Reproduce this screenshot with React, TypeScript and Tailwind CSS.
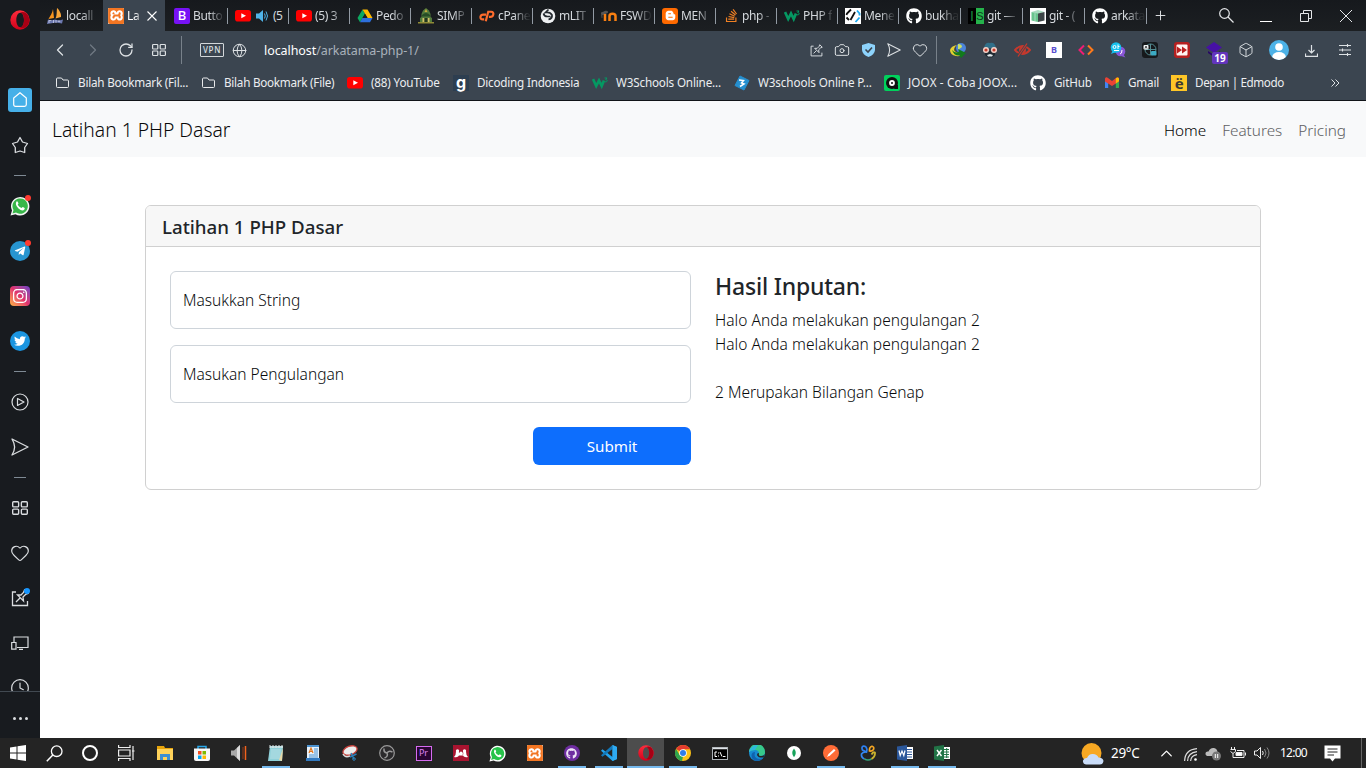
import type { ReactNode } from 'react';
import {
  FaGithub, FaTelegramPlane, FaTwitter, FaStackOverflow, FaBloggerB, FaInstagram,
} from 'react-icons/fa';
import { SiXampp } from 'react-icons/si';
import {
  ChevronLeft, ChevronRight, RotateCw, Globe, Camera, Heart, Box, Plus, ChevronUp, Clock,
} from 'lucide-react';

/* ---------- shared drawings ---------- */

const Opera = ({ size }: { size: number }) => (
  <svg width={size} height={size} viewBox="0 0 20 20">
    <defs>
      <linearGradient id="opg" x1="0" y1="0" x2="0" y2="1">
        <stop offset="0" stopColor="#ff2b3c" />
        <stop offset="1" stopColor="#d0021b" />
      </linearGradient>
    </defs>
    <path d="M10 0.3A9.7 9.7 0 1 0 10 19.700A9.700 9.700 0 0 0 10 .3ZM10.300 2.800C12.600 2.800 14 6 14 10S12.600 17.200 10.300 17.200S6.300 14 6.300 10S8 2.800 10.300 2.800Z" fill="url(#opg)" fillRule="evenodd" />
    <path d="M10.300 2.800C12.600 2.800 14 6 14 10S12.600 17.200 10.300 17.200C12 19 16 17.800 17.500 15.500A9.700 9.700 0 0 0 17.500 4.500C16 2.200 12.500 1 10.300 2.800Z" fill="#a70014" />
  </svg>
);

const YT = () => (
  <span className="flex h-4 w-4 items-center justify-center">
    <svg width="16" height="12" viewBox="0 0 16 12">
      <rect width="16" height="11.500" rx="2.800" fill="#f00" />
      <path d="M6.300 3.300L11 5.800L6.300 8.300Z" fill="#fff" />
    </svg>
  </span>
);

const Xampp = () => (
  <span className="flex h-4 w-4 shrink-0 items-center justify-center overflow-hidden rounded-[1px] bg-white">
    <SiXampp size={17} color="#f37623" className="shrink-0" />
  </span>
);

const Sail = () => (
  <svg width="16" height="16" viewBox="0 0 16 16">
    <path d="M6 1L7 10L1.500 11C3 8 5.500 5 6 1Z" fill="#f7941e" />
    <path d="M10 0C9.500 4 10 8 8.500 10.500L14 9C14.500 6 12.500 2 10 0Z" fill="#f9a63a" />
    <path d="M0 16L1 11.500L4 12.500L8 11.500L12 12.500L16 11.500L15 15.500L9 14.500Z" fill="#6c78af" />
    <path d="M2 15V12.500H4.500M6.500 12V15M9 12V15M11 14L12 12.500L13 14" stroke="#c9cde6" fill="none" strokeWidth=".8" />
  </svg>
);

const Drive = () => (
  <svg width="16" height="16" viewBox="0 0 16 16">
    <path d="M5.500 1.500L.5 10L3 14.200L8 5.800Z" fill="#0da960" />
    <path d="M5.500 1.500H10.500L15.500 10H10.500Z" fill="#ffba00" />
    <path d="M5.400 10H15.500L13 14.200H3Z" fill="#2d6fdd" />
    <path d="M8 5.800L10.500 10H5.500Z" fill="#1b1f23" />
  </svg>
);

const Simp = () => (
  <svg width="16" height="16" viewBox="0 0 16 16">
    <path d="M8 0L11 2.500L12.500 6L12.500 9L14 10V14H2V10L3.500 9V6L5 2.500Z" fill="#517a3c" />
    <path d="M8 1L9.500 4H6.500Z" fill="#c7a93d" />
    <path d="M4 7Q8 3 12 7V8.500H4Z" fill="#274d26" />
    <path d="M4.500 14V10H6.500V14M9.500 14V10H11.500V14" fill="#d2c068" />
    <rect x="6.500" y="10" width="3" height="4" fill="#24371f" />
    <rect y="14" width="16" height="1.500" fill="#8f8a36" />
  </svg>
);

const CPanel = () => (
  <svg width="17" height="12" viewBox="0 0 17 12" fill="none" stroke="#ff6c2c" strokeWidth="2.300">
    <path d="M7.500 4.500H4.500Q2 4.500 1.500 7Q1.300 9.500 4 9.500H5.500" />
    <path d="M7.200 11.500L9.800 1.500H13Q15.700 1.700 15.200 4.500Q14.600 7 12 7H10.500" />
  </svg>
);

const Mlite = () => (
  <svg width="16" height="16" viewBox="0 0 16 16">
    <circle cx="8" cy="8" r="7.300" fill="#eef0f2" />
    <path d="M8.500 1.500L5.500 4.500Q10 3.500 12 7Q12.500 10.500 8.500 11.500M10.500 8.500H7.500Q4 8.500 3.500 5.500" fill="none" stroke="#23292f" strokeWidth="1.700" />
  </svg>
);

const Moodle = () => (
  <svg width="16" height="16" viewBox="0 0 16 16">
    <path d="M0 5L5 3L7 4L4 6L1 6.500V10" fill="#555" stroke="#666" strokeWidth=".6" />
    <path d="M4 13V6M8.500 13V8C8.500 5 14.500 5 14.500 8V13" fill="none" stroke="#f98012" strokeWidth="2.500" />
  </svg>
);

const W3 = () => (
  <svg width="16" height="16" viewBox="0 0 16 16">
    <path d="M1 4L4.200 11L7 5.500L9.700 11L12 5.500" fill="none" stroke="#059862" strokeWidth="2.700" />
    <path d="M12.500 3H15L13.700 4.500C16 4.500 15.500 7.500 13 6.800" fill="none" stroke="#059862" strokeWidth="1" />
  </svg>
);

const CodeSquare = () => (
  <svg width="16" height="16" viewBox="0 0 16 16">
    <rect width="16" height="16" fill="#fff" />
    <path d="M6 1.500L2 5.500L1.500 7M1.500 9.500L4 12M10 4L5.500 12" fill="none" stroke="#111" strokeWidth="1.800" />
    <path d="M12 2.500L14.500 5.500V7.500M14.500 9.500L10.500 14" fill="none" stroke="#1daaf1" strokeWidth="1.800" />
  </svg>
);

const ISIcon = () => (
  <span className="flex h-4 w-4 font-['Liberation_Sans'] text-[14px] leading-4">
    <span className="w-2 bg-black text-center text-[#18883c]">I</span>
    <span className="w-2 bg-[#25b34b] text-center text-[11px] text-[#0d331c]">S</span>
  </span>
);

const GitBox = () => (
  <svg width="16" height="16" viewBox="0 0 16 16">
    <rect width="16" height="16" fill="#fff" />
    <path d="M1.500 4L8 2L14.500 4L8 6Z" fill="#a9dcc0" />
    <path d="M1.500 4L8 5.500V14L1.500 12.500Z" fill="#68c48d" />
    <path d="M8 5.500L14.500 4V12.500L8 14Z" fill="#3d4547" />
    <path d="M5 5V13" stroke="#a9dcc0" />
  </svg>
);

const Blogger = () => (
  <span className="flex h-4 w-4 items-center justify-center rounded-[3px] bg-[#ff6a00]"><FaBloggerB size={11} color="#fff" /></span>
);

const Grid4 = ({ size = 14 }: { size?: number }) => (
  <svg width={size} height={size} viewBox="0 0 14 14" fill="none" stroke="currentColor" strokeWidth="1.200">
    <rect x=".6" y="1.500" width="5.200" height="4.500" rx=".8" /><rect x="8.200" y="1.500" width="5.200" height="4.500" rx=".8" />
    <rect x=".6" y="8" width="5.200" height="4.500" rx=".8" /><rect x="8.200" y="8" width="5.200" height="4.500" rx=".8" />
  </svg>
);

const SendIcon = ({ size = 14 }: { size?: number }) => (
  <svg width={size} height={size} viewBox="0 0 18 18" fill="none" stroke="currentColor" strokeWidth="1.300" strokeLinejoin="round">
    <path d="M1 1L17 9L1 17C4.500 11 4.500 7 1 1Z" />
  </svg>
);

const PinIcon = ({ size = 14 }: { size?: number }) => (
  <svg width={size} height={size} viewBox="0 0 18 18" fill="none" stroke="currentColor" strokeWidth="1.300">
    <path d="M5 3H1.500V16.500H16.500V12" />
    <path d="M13.500 1L17 4.500L14.500 5.500L12 8L12.500 12L6.500 6L10 6L12.500 3.500ZM9 9L5 13" />
  </svg>
);

const Folder = () => (
  <svg width="13" height="16" viewBox="0 0 13 16" fill="none" stroke="#e8eaec" strokeWidth="1">
    <path d="M.5 4V11.500Q.5 12.500 1.500 12.500H11.500Q12.500 12.500 12.500 11.500V6Q12.500 5 11.500 5H7L5.500 3H1.500Q.5 3 .5 4Z" />
  </svg>
);

/* ---------- tabs ---------- */

const TabText = ({ children }: { children: ReactNode }) => (
  <span className="ml-[3px] shrink-0 whitespace-nowrap text-[12px] tracking-[-0.35px] text-[#d4d8dc] [mask-image:linear-gradient(to_right,black_16px,rgba(0,0,0,0.1)_30px)]">{children}</span>
);

const Sep = () => <span className="ml-auto h-4 w-px shrink-0 bg-[#929aa3]" />;

const narrowTabs: [ReactNode, string][] = [
  [<YT />, '(5) 3'],
  [<Drive />, 'Pedo'],
  [<Simp />, 'SIMP'],
  [<CPanel />, 'cPane'],
  [<Mlite />, 'mLIT'],
  [<Moodle />, 'FSWD'],
  [<Blogger />, 'MEN'],
  [<FaStackOverflow size={15} color="#f08024" />, 'php -'],
  [<W3 />, 'PHP f'],
  [<CodeSquare />, 'Mene'],
  [<FaGithub size={16} color="#fff" />, 'bukha'],
  [<ISIcon />, 'git —'],
  [<GitBox />, 'git - ('],
  [<FaGithub size={16} color="#fff" />, 'arkata'],
];

const TabBar = () => (
  <div className="flex h-[31px] bg-gradient-to-b from-[#16191d] to-[#1c1f22]">
    <div className="flex w-[63px] items-center pl-[7px]"><Sail /><TabText>locall</TabText></div>
    <div className="flex w-[62px] items-center bg-[#3b4550] pl-[5px] text-white">
      <Xampp />
      <span className="ml-[3px] w-[14px] text-[12px] tracking-[-0.3px] [mask-image:linear-gradient(to_right,black_60%,rgba(0,0,0,0.3))]">La</span>
      <svg width="10" height="10" viewBox="0 0 10 10" className="ml-[6px]" fill="none" stroke="#fff" strokeWidth="1.100"><path d="M.5.5L9.500 9.500M9.500.5L.5 9.500" /></svg>
    </div>
    <div className="flex w-[63px] items-center pl-[9px]">
      <span className="flex h-4 w-4 shrink-0 items-center justify-center rounded-[2px] bg-[#7712f5] text-[13px] font-medium text-white">B</span>
      <TabText>Butto</TabText>
      <Sep />
    </div>
    <div className="flex w-[61px] items-center pl-[7px]">
      <YT />
      <svg width="13" height="14" viewBox="0 0 13 14" className="ml-[5px]">
        <path d="M0 4.500H3L7 1V13L3 9.500H0Z" fill="#4fb3e8" />
        <path d="M8.500 4.500Q10 7 8.500 9.500M10 2.500Q13 7 10 11.500" stroke="#4fb3e8" fill="none" />
      </svg>
      <span className="ml-1 text-[12px] tracking-[-0.7px] text-[#d4d8dc]">(5</span>
      <Sep />
    </div>
    {narrowTabs.map(([icon, text], i) => (
      <div key={i} className={`flex shrink-0 items-center pl-[7px] ${i < 10 ? 'w-[61px]' : 'w-[62px]'}`}>
        <span className="flex w-4 shrink-0 justify-center">{icon}</span>
        <TabText>{text}</TabText>
        <Sep />
      </div>
    ))}
    <div className="flex w-[27px] items-center justify-center text-[#e5e7e9]"><Plus size={15} strokeWidth={1.500} /></div>
    <div className="ml-auto flex items-center text-[#e5e7e9]">
      <span className="flex w-10 justify-center">
        <svg width="15" height="15" viewBox="0 0 15 15" fill="none" stroke="currentColor" strokeWidth="1.200"><circle cx="5.500" cy="5.500" r="4.800" /><path d="M9 9L14.500 14.500" /></svg>
      </span>
      <span className="flex w-10 justify-center pt-[11px]"><span className="h-px w-3 bg-white" /></span>
      <span className="flex w-10 justify-center">
        <svg width="12" height="12" viewBox="0 0 12 12" fill="none" stroke="currentColor"><path d="M.5 3.500H8.500V11.500H.5ZM3.500 3.500V.5H11.500V8.500H8.500" /></svg>
      </span>
      <span className="flex w-10 justify-center">
        <svg width="12" height="12" viewBox="0 0 12 12" fill="none" stroke="currentColor"><path d="M0 0L12 12M12 0L0 12" /></svg>
      </span>
    </div>
  </div>
);

/* ---------- toolbar ---------- */

const extensions: ReactNode[] = [
  <svg width="17" height="15" viewBox="0 0 17 15">
    <circle cx="11" cy="5" r="5" fill="#4b83d8" /><path d="M8 1Q12 1 12 4L8 7Z" fill="#c9df63" />
    <path d="M0 7Q1 3 7 2Q3 5 4.500 8Q7 11 14 9Q11 14 6 13Q0 12 0 7Z" fill="#e5cf32" />
    <path d="M2 7Q5 11 9 8.500L8 6L16 10L11 15L9.500 12.500Q4 13 2 7Z" fill="#127a1c" />
  </svg>,
  <svg width="16" height="16" viewBox="0 0 16 16">
    <path d="M2 6Q3 0 8 1Q13 0 14 6Z" fill="#31708a" /><path d="M3 9H13V13L10 15.500H6L3 13Z" fill="#1f2931" />
    <path d="M5 13L8 12L11 13L10 14.500H6Z" fill="#dfe6ea" />
    <circle cx="4" cy="8" r="3" fill="#f6d3ca" /><circle cx="12" cy="8" r="3" fill="#f6d3ca" />
    <circle cx="4" cy="8" r="1.600" fill="#c63a2a" /><circle cx="12" cy="8" r="1.600" fill="#c63a2a" />
  </svg>,
  <svg width="17" height="14" viewBox="0 0 17 14">
    <path d="M1 7Q8.500-1 16 7Q8.500 15 1 7Z" fill="none" stroke="#c5392d" strokeWidth="1.900" />
    <circle cx="8.500" cy="7" r="3.500" fill="#c5392d" /><path d="M4 13.500L13 .5" stroke="#3b4550" strokeWidth="2.600" /><path d="M4 13.500L13 .5" stroke="#c5392d" strokeWidth="1.300" />
  </svg>,
  <span className="flex h-4 w-4 items-center justify-center bg-white text-[9px] font-bold text-[#5a4fcf]">B</span>,
  <svg width="16" height="12" viewBox="0 0 16 12" fill="none" strokeWidth="2"><path d="M6 1.500L1.500 6L6 10.500" stroke="#f01c75" /><path d="M10 1.500L14.500 6L10 10.500" stroke="#ff7a1a" /></svg>,
  <svg width="16" height="16" viewBox="0 0 16 16">
    <circle cx="10.500" cy="9.500" r="4.800" fill="#8855d7" /><path d="M13 12L15.500 15.500L11 14Z" fill="#8855d7" />
    <circle cx="6" cy="5.500" r="5.300" fill="#16c0ed" /><path d="M3 8L1 12L6 10Z" fill="#16c0ed" />
    <circle cx="4.500" cy="5" r="1.500" fill="none" stroke="#fff" strokeWidth="1" /><path d="M8 2.500V7M8 4.500H9.500M4 8.500H9M10 12Q12 12 12 8" stroke="#fff" fill="none" />
  </svg>,
  <svg width="16" height="16" viewBox="0 0 16 16">
    <rect width="16" height="16" rx="3" fill="#16191c" /><circle cx="8.500" cy="7.500" r="5.500" fill="none" stroke="#538b91" strokeWidth="1" />
    <path d="M3 7.500H14M8.500 2V13" stroke="#538b91" /><rect x="1.500" y="3" width="5" height="4.500" rx="1" fill="#f1f4f5" />
    <path d="M3 6.500L4 4L5 6.500" fill="none" stroke="#222" strokeWidth=".8" /><rect x="9" y="9" width="5.500" height="4.500" rx="1" fill="#3baac3" />
  </svg>,
  <svg width="16" height="16" viewBox="0 0 16 16">
    <rect width="16" height="16" rx="3" fill="#b52020" /><rect x="2.500" y="2.500" width="11" height="11" rx="1" fill="#fff5f2" />
    <path d="M3 4.500L8 8L3 11.500ZM8 4.500L13 8L8 11.500Z" fill="#bb2020" />
  </svg>,
  <span className="relative flex">
    <svg width="16" height="16" viewBox="0 0 16 16"><path d="M8 0L16 5.500L8 11L0 5.500Z" fill="#4711a5" /><path d="M2 9L8 13L14 9V11L8 15L2 11Z" fill="#270667" /></svg>
    <span className="absolute left-[6px] top-[10px] flex h-3 w-4 items-center justify-center rounded-[2px] bg-[#6335bd] text-[10px] font-bold text-white">19</span>
  </span>,
];

const Toolbar = () => (
  <div className="flex h-[38px] items-center text-[#dde1e4]">
    <div className="ml-[3px] flex">
      <span className="flex w-[33px] justify-center"><ChevronLeft size={20} strokeWidth={1.500} /></span>
      <span className="flex w-[33px] justify-center text-[#6f7983]"><ChevronRight size={20} strokeWidth={1.500} /></span>
      <span className="flex w-[33px] items-center justify-center"><RotateCw size={16} strokeWidth={1.900} /></span>
      <span className="flex w-[33px] items-center justify-center"><Grid4 /></span>
    </div>
    <span className="ml-[6px] h-7 w-px bg-[#78818a]" />
    <span className="ml-[18px] flex h-[14px] w-6 items-center justify-center rounded-[1px] border border-[#d3d7da] text-[8px] font-medium tracking-[0.7px]">VPN</span>
    <Globe size={15} strokeWidth={1.600} className="ml-2" />
    <span className="ml-[17px] pt-[2px] text-[12.500px] tracking-[-0.07px] text-[#a9b2bb]"><span className="text-white">localhost</span>/arkatama-php-1/</span>
    <div className="ml-auto flex items-center">
      <span className="flex w-[26px] justify-center"><PinIcon size={13} /></span>
      <span className="flex w-[26px] justify-center"><Camera size={16} strokeWidth={1.500} /></span>
      <span className="flex w-[26px] justify-center">
        <svg width="13" height="14" viewBox="0 0 13 14"><path d="M6.500 0L13 2V7Q12.500 12 6.500 14Q.5 12 0 7V2Z" fill="#8dd3fc" /><path d="M3.500 6.500L6 9L10 4.500" stroke="#3b4550" strokeWidth="1.600" fill="none" /></svg>
      </span>
      <span className="flex w-[26px] justify-center"><SendIcon size={14} /></span>
      <span className="flex w-[26px] justify-center"><Heart size={16} strokeWidth={1.500} /></span>
      <span className="ml-[3px] mr-[5px] h-7 w-px bg-[#78818a]" />
      {extensions.map((e, i) => <span key={i} className="flex w-8 items-center justify-center">{e}</span>)}
      <span className="flex w-[31px] justify-center"><Box size={16} strokeWidth={1.400} /></span>
      <span className="flex w-[35px] justify-center">
        <svg width="20" height="20" viewBox="0 0 20 20"><clipPath id="av"><circle cx="10" cy="10" r="10" /></clipPath><g clipPath="url(#av)"><rect width="20" height="20" fill="#4cb2e7" /><circle cx="10" cy="7" r="3.800" fill="#fff" /><ellipse cx="10" cy="17" rx="6.800" ry="5" fill="#fff" /></g></svg>
      </span>
      <span className="flex w-[31px] justify-center">
        <svg width="13" height="13" viewBox="0 0 13 13" fill="none" stroke="currentColor" strokeWidth="1.200"><path d="M6.500 1V8.500M3.500 6L6.500 9L9.500 6M.5 9.500V12.400H12.500V9.500" /></svg>
      </span>
      <span className="mr-[4px] flex w-[35px] justify-center pl-px">
        <svg width="12" height="12" viewBox="0 0 12 12" fill="none" stroke="currentColor" strokeWidth="1.100"><path d="M0 1.500H12M0 6H12M0 10.500H12M8.500 0V3M3.500 4.500V7.500M8.500 9V12" /></svg>
      </span>
    </div>
  </div>
);

/* ---------- bookmarks ---------- */

const Bookmark = ({ icon, text, className }: { icon: ReactNode; text: string; className: string }) => (
  <div className={`flex shrink-0 items-center whitespace-nowrap ${className}`}>
    <span className="mr-2 flex w-4 shrink-0 justify-center">{icon}</span>
    <span className="-mt-px">{text}</span>
  </div>
);

const Bookmarks = () => (
  <div className="flex h-[29px] items-center pl-[14px] text-[11.700px] tracking-[-0.17px] text-[#eceef0]">
    <Bookmark icon={<Folder />} text="Bilah Bookmark (Fil..." className="w-[146px] tracking-[-0.22px]" />
    <Bookmark icon={<Folder />} text="Bilah Bookmark (File)" className="w-[147px] tracking-[-0.26px]" />
    <Bookmark icon={<YT />} text="(88) YouTube" className="w-[106px]" />
    <Bookmark icon={<span className="flex h-4 w-4 items-center justify-center bg-[#2d3e50] pb-[3px] font-['Inter'] text-[16px] font-bold leading-none text-white">g</span>} text="Dicoding Indonesia" className="w-[139px] tracking-[-0.22px]" />
    <Bookmark icon={<W3 />} text="W3Schools Online..." className="w-[142px]" />
    <Bookmark
      icon={<svg width="16" height="16" viewBox="0 0 16 16"><path d="M6 1L15 5.500L10 15L1 10.500Z" fill="#258fcf" stroke="#258fcf" strokeLinejoin="round" /><path d="M5 5L9.500 5.500L7.500 8L10 9L6 11.500" fill="none" stroke="#fff" strokeWidth="1.500" /></svg>}
      text="W3schools Online P..." className="w-[150px] tracking-[-0.1px]"
    />
    <Bookmark
      icon={<svg width="16" height="16" viewBox="0 0 16 16"><rect width="16" height="16" rx="2" fill="#00d15c" /><circle cx="8" cy="8" r="6" fill="#111" /><circle cx="8" cy="8" r="2.900" fill="#fff" /><circle cx="8" cy="8" r="1" fill="#111" /><path d="M12 10H14V14H10Z" fill="#111" /></svg>}
      text="JOOX - Coba JOOX..." className="w-[146px] tracking-[0.14px]"
    />
    <Bookmark icon={<FaGithub size={16} color="#fff" />} text="GitHub" className="w-[74px]" />
    <Bookmark
      icon={<svg width="14" height="12" viewBox="0 0 14 12"><path d="M0 2V11H3.200V5Z" fill="#4285f4" /><path d="M14 2V11H10.800V5Z" fill="#34a853" /><path d="M0 1.500Q1-.5 3 1L7 4L11 1Q13-.5 14 1.500V4.500L7 9L0 4.500Z" fill="#ea4335" /><path d="M10.800 1.200Q13-.5 14 1.500V4.300L10.800 6.500Z" fill="#fbbc04" /></svg>}
      text="Gmail" className="w-[67px]"
    />
    <Bookmark
      icon={<span className="flex h-4 w-4 items-end justify-center bg-[#ffc627] text-[15px] font-bold leading-[15px] text-[#3b3a35]">ë</span>}
      text="Depan | Edmodo" className="w-[130px] tracking-[-0.4px]"
    />
    <svg width="9" height="8" viewBox="0 0 9 8" className="-mt-0.5 ml-auto mr-[26px]" fill="none" stroke="#dde1e4"><path d="M.5.5L4 4L.5 7.500M4.500.5L8 4L4.500 7.500" /></svg>
  </div>
);

/* ---------- sidebar ---------- */

const SideCell = ({ children }: { children: ReactNode }) => (
  <div className="flex h-[45px] shrink-0 items-center justify-center">
    <span className="relative flex">{children}</span>
  </div>
);
const SideDash = () => <div className="flex h-4 shrink-0 items-center justify-center"><span className="h-px w-3 bg-[#7f8a94]" /></div>;
const Dot = ({ color }: { color: string }) => <span className={`absolute -right-px -top-px h-[6px] w-[6px] rounded-full ${color}`} />;

const Sidebar = () => (
  <aside className="flex w-10 shrink-0 flex-col bg-[#181b1f] text-[#dadde0]">
    <div className="flex h-[77px] shrink-0 justify-center pt-[10px]"><Opera size={20} /></div>
    <div className="flex h-[614px] flex-col overflow-hidden">
      <SideCell>
        <span className="flex h-6 w-6 items-center justify-center rounded-[3px] bg-[#46b0e8]">
          <svg width="14" height="15" viewBox="0 0 14 15" fill="none" stroke="#fff" strokeWidth="1.200"><path d="M7 .7L13.300 6V12.500Q13.300 14.300 11.500 14.300H2.500Q.7 14.300 .7 12.500V6Z" /></svg>
        </span>
      </SideCell>
      <SideCell>
        <svg width="18" height="18" viewBox="0 0 18 18" fill="none" stroke="currentColor" strokeWidth="1.300" strokeLinejoin="round"><path d="M9 1.500L11.500 6L16.500 7.500L13.700 11.500V16.500L9 15L4.300 16.500V11.500L1.500 7.500L6.500 6Z" /></svg>
      </SideCell>
      <SideDash />
      <SideCell>
        <svg width="20" height="20" viewBox="0 0 20 20"><path d="M.5 19.500L2 14.500A9.200 9.200 0 1 1 5.500 18.200Z" fill="#f3f6f4" /><path d="M2.500 17.500L3.500 14A7.700 7.700 0 1 1 6 16.600Z" fill="#38b749" /><path d="M6.500 5.500Q7.500 4.500 8.500 7.500L7.700 8.700Q9 11 11.500 12L12.700 11Q15.500 12 14.500 13.200Q12.500 16 8.500 12.500Q4.500 8.500 6.500 5.500Z" fill="#fff" /></svg>
        <Dot color="bg-[#ff3b30]" />
      </SideCell>
      <SideCell>
        <span className="flex h-5 w-5 items-center justify-center rounded-full bg-[#2795d0]"><FaTelegramPlane size={12} color="#fff" /></span>
        <Dot color="bg-[#ff3b30]" />
      </SideCell>
      <SideCell>
        <span className="flex h-5 w-5 items-center justify-center rounded-[4px] bg-gradient-to-tr from-[#fdb13c] via-[#e1306c] to-[#6d38c8]"><FaInstagram size={16} color="#fff" /></span>
      </SideCell>
      <SideCell><span className="flex h-5 w-5 items-center justify-center rounded-full bg-[#1b95e0]"><FaTwitter size={12} color="#fff" /></span></SideCell>
      <SideDash />
      <SideCell>
        <svg width="18" height="18" viewBox="0 0 18 18" fill="none" stroke="currentColor" strokeWidth="1.200"><circle cx="9" cy="9" r="8" /><path d="M6.500 5.500V12.500L13 9Z" strokeLinejoin="round" /></svg>
      </SideCell>
      <SideCell><SendIcon size={18} /></SideCell>
      <SideDash />
      <SideCell><Grid4 size={16} /></SideCell>
      <SideCell><Heart size={20} strokeWidth={1.400} /></SideCell>
      <SideCell><PinIcon size={18} /><Dot color="bg-[#1696ff]" /></SideCell>
      <SideCell>
        <svg width="18" height="14" viewBox="0 0 18 14" fill="none" stroke="currentColor" strokeWidth="1.200"><path d="M3 6V1H17V11.500H6M.7 6.500H5V13.200H.7ZM8 13.400H12" /></svg>
      </SideCell>
      <SideCell><Clock size={20} strokeWidth={1.400} /></SideCell>
    </div>
    <div className="flex flex-1 items-center justify-center gap-[3px] border-t border-[#414951] pt-[6px]">
      <span className="h-[3px] w-[3px] rounded-full bg-[#dadde0]" />
      <span className="h-[3px] w-[3px] rounded-full bg-[#dadde0]" />
      <span className="h-[3px] w-[3px] rounded-full bg-[#dadde0]" />
    </div>
  </aside>
);

/* ---------- page ---------- */

const Page = () => (
  <main className="flex-1 bg-white text-[#212529]">
    <nav className="flex h-14 items-center bg-[#f8f9fa] px-3">
      <span className="pt-[3px] text-[19.300px] font-light text-[#080808]">Latihan 1 PHP Dasar</span>
      <div className="ml-auto flex gap-4 pr-2 pt-[3px] text-[15.300px] font-light text-[#5e6062]">
        <span className="text-black">Home</span>
        <span>Features</span>
        <span>Pricing</span>
      </div>
    </nav>
    <section className="ml-[105px] mt-12 h-[285px] w-[1116px] overflow-hidden rounded-md border border-[#d0d0d0]">
      <h5 className="flex h-[41px] items-center border-b border-[#d0d0d0] bg-[#f7f7f7] px-4 pt-[2px] text-[18.700px] font-medium">Latihan 1 PHP Dasar</h5>
      <div className="grid grid-cols-2 gap-6 p-6 text-[15.500px] font-light text-[#080a0c]">
        <form className="flex flex-col">
          <label className="flex h-[58px] items-center rounded-md border border-[#ced4da] px-3 pt-[2px]">Masukkan String</label>
          <label className="mt-4 flex h-[58px] items-center rounded-md border border-[#ced4da] px-3 pt-[2px]">Masukan Pengulangan</label>
          <button type="button" className="ml-auto mt-6 h-[38px] w-[158px] rounded-md bg-[#0d6efd] text-[15.200px] font-normal text-white">Submit</button>
        </form>
        <div className="leading-6">
          <h4 className="mb-[7px] pt-px text-[23px] font-medium leading-[29px] tracking-[-0.2px] text-[#212529]">Hasil Inputan:</h4>
          <p className="tracking-[0.04px]">Halo Anda melakukan pengulangan 2</p>
          <p className="tracking-[0.04px]">Halo Anda melakukan pengulangan 2</p>
          <p className="mt-6">2 Merupakan Bilangan Genap</p>
        </div>
      </div>
    </section>
  </main>
);

/* ---------- taskbar ---------- */

type TaskItem = { icon: ReactNode; open?: boolean; active?: boolean };

const apps: TaskItem[] = [
  { icon: <svg width="16" height="16" viewBox="0 0 16 16"><path d="M0 1H7L8 3H16V15H0Z" fill="#e7a40b" /><path d="M0 4H16V15H0Z" fill="#ffd35b" /><path d="M3 15V9H13V15H10V12H6V15Z" fill="#3d8fd4" /></svg> },
  { icon: <svg width="16" height="16" viewBox="0 0 16 16"><path d="M4 4V1.500H12V4" fill="none" stroke="#28a8ea" strokeWidth="1.500" /><path d="M0 3.500H16V14Q16 16 14 16H2Q0 16 0 14Z" fill="#f7f7f7" /><path d="M4 6H7.500V9.500H4Z" fill="#f25022" /><path d="M8.500 6H12V9.500H8.500Z" fill="#7fba00" /><path d="M4 10.500H7.500V14H4Z" fill="#00a4ef" /><path d="M8.500 10.500H12V14H8.500Z" fill="#ffb900" /></svg> },
  { icon: <svg width="16" height="16" viewBox="0 0 16 16"><path d="M0 5.500H3L9 0V16L3 10.500H0Z" fill="#a9a9a9" /><path d="M6 3L9 0V16L6 13Z" fill="#ddd" /><path d="M12 2V14" stroke="#8f3714" strokeWidth="1" /><path d="M14.500 1V15" stroke="#f2631d" strokeWidth="1.500" /></svg> },
  { icon: <svg width="16" height="16" viewBox="0 0 16 16"><path d="M2 1H15L14 16H0Z" fill="#8fd0d8" /><path d="M3 4H13L12 14H2Z" fill="#a4d8df" /><path d="M2 2H15M2 0V3M5 0V3M8 0V3M11 0V3M14 0V3" stroke="#dfe7e8" /><path d="M15 3L14 16L11 15Z" fill="#e7d9a8" /></svg>, open: true },
  { icon: <svg width="16" height="16" viewBox="0 0 16 16"><path d="M2 0H14V14H2Z" fill="#e8f2fb" /><path d="M2 0H14V2H2Z" fill="#4b92d0" /><path d="M4 8L6 3L8 8M4.500 6.500H7.500" stroke="#e3771d" fill="none" strokeWidth="1.200" /><path d="M9 4H13M9 6H13M9 8H13M4 10H13M4 12H13" stroke="#4b92d0" /><path d="M1 13H15V16H1Z" fill="#337ac0" /></svg> },
  { icon: <svg width="16" height="16" viewBox="0 0 16 16"><ellipse cx="8" cy="5.500" rx="7.300" ry="4.300" transform="rotate(-20 8 5.500)" fill="#eee" stroke="#c8433d" strokeWidth="1.300" /><path d="M1 9Q3 13 8 11" stroke="#ddd" strokeWidth="1.500" fill="none" /><path d="M9 8L12 14M14.500 9L8 12" stroke="#2d7fb8" strokeWidth="1.500" /><circle cx="12" cy="14" r="1.300" fill="none" stroke="#2d7fb8" /></svg> },
  { icon: <svg width="16" height="16" viewBox="0 0 16 16" fill="none" stroke="#9a9a9a"><circle cx="8" cy="8" r="7.300" fill="#2b2a2c" strokeWidth="1.200" /><path d="M8 8Q4.500 7.500 5 3.500M8 8Q10.200 5 13.500 7.200M8 8Q9.500 11.500 5.500 13" strokeWidth="1.500" /></svg> },
  { icon: <span className="flex h-[15px] w-4 items-center justify-center border border-[#d66bf0] bg-[#2a0634] text-[9px] text-[#df85f5]">Pr</span> },
  { icon: <span className="flex h-4 w-4 items-center justify-center bg-[#a91430]"><svg width="14" height="9" viewBox="0 0 14 9" fill="#fff"><circle cx="3.500" cy="2" r="1.700" /><circle cx="7" cy="4" r="1.500" /><circle cx="10.500" cy="2" r="1.700" /><path d="M2 2.500L4.500 3L5.500 5Q4.500 9 0 8Q2 6 2 2.500ZM12 2.500L9.500 3L8.500 5Q9.500 9 14 8Q12 6 12 2.500ZM4.500 3L7 5L9.500 3L9 6.500H5Z" /></svg></span> },
  { icon: <svg width="17" height="17" viewBox="0 0 20 20"><path d="M.5 19.500L2 14.500A9.300 9.300 0 1 1 5.500 18.200Z" fill="#fff" /><path d="M2.500 17.500L3.500 14A7.700 7.700 0 1 1 6 16.600Z" fill="#27c34a" /><path d="M6.500 5.500Q7.500 4.500 8.500 7.500L7.700 8.700Q9 11 11.500 12L12.700 11Q15.500 12 14.500 13.200Q12.500 16 8.500 12.500Q4.500 8.500 6.500 5.500Z" fill="#fff" /></svg> },
  { icon: <Xampp /> },
  { icon: <span className="flex h-4 w-4 items-center justify-center rounded-full bg-[#6e2da0]"><FaGithub size={11} color="#efe6f6" /></span>, open: true },
  { icon: <svg width="16" height="16" viewBox="0 0 16 16"><path d="M11.500 0L16 2V14L11.500 16L0 5.800L1.500 4.300L11.500 12Z" fill="#23a4ee" /><path d="M11.500 0V4L1.500 11.700L0 10.200Z" fill="#1277b8" /><path d="M11.500 0L16 2V14L11.500 16Z" fill="#2eaaf2" /></svg>, open: true },
  { icon: <Opera size={16} />, open: true, active: true },
  { icon: <svg width="16" height="16" viewBox="0 0 16 16"><circle cx="8" cy="8" r="8" fill="#fbc116" /><path d="M8 8L1.100 4A8 8 0 0 1 15 4.200H8Z" fill="#e33b2e" /><path d="M1.100 4L4.900 10.500L8 11.500L7 16A8 8 0 0 1 1.100 4Z" fill="#2ea44f" /><circle cx="8" cy="8" r="3.800" fill="#fff" /><circle cx="8" cy="8" r="3" fill="#2f7de9" /></svg>, open: true },
  { icon: <svg width="16" height="13" viewBox="0 0 16 13"><rect x=".5" y=".5" width="15" height="12" fill="#000" stroke="#aab0b5" /><path d="M1 1.500H15" stroke="#dde2e6" strokeWidth="1.500" /><path d="M5 5H3V9.500H5M6.500 5.500V6.500M6.500 8.500V9.500M8 5L10 9.500M11 9.500H13.500" stroke="#fff" fill="none" /></svg> },
  { icon: <svg width="16" height="16" viewBox="0 0 16 16"><circle cx="8" cy="8" r="8" fill="#168bd1" /><path d="M0 7A8 8 0 0 1 16 7Q16 11 11 11Q9 11 10 9Q10 5 6 5Q2 5 0 7Z" fill="#37c98b" /><path d="M0 6Q3 0 9 .1L6 5Q2 5 0 7Z" fill="#2cb8dc" /><path d="M6 7Q4 14 11 14L14 13.200Q11 16 8 16Q2 15 2.500 10Q3 7 6 7Z" fill="#1062ae" /><path d="M10 9Q9 11 12 11Q15 11 16 9L14.500 12.500Q9 13 8 10Q8 8 9.700 8Z" fill="#242424" /></svg> },
  { icon: <svg width="14" height="14" viewBox="0 0 14 14"><circle cx="7" cy="7" r="7" fill="#fff" /><path d="M7 2.500Q10.500 7 7 11.200Q3.500 7 7 2.500Z" fill="#17a35b" /></svg> },
  { icon: <svg width="16" height="16" viewBox="0 0 16 16"><circle cx="8" cy="8" r="8" fill="#ff6c37" /><path d="M4 12L5.500 9L11 4L12.500 5.500L7 10.500Z" fill="#fff" /></svg>, open: true },
  { icon: <svg width="16" height="16" viewBox="0 0 16 16" fill="none" strokeWidth="1.700"><path d="M6.500 7L2.500 5Q1 2 3.500 1Q6.500 1 7 4.500Z" stroke="#2d7ff0" /><path d="M9.500 6Q9 2 12 1.200Q14.500 2 13.500 4.500Q12 6.500 9.500 6Z" stroke="#f5a623" /><path d="M7 7Q3 6.500 1.500 9Q1 12.500 4.500 14" stroke="#3486ee" /><path d="M4.500 14Q8 16 11.500 14" stroke="#35a67c" /><path d="M11.500 14Q15.500 11.500 15 7.500Q13 6.500 11.500 9.500" stroke="#c9b32e" /></svg> },
  { icon: <svg width="16" height="16" viewBox="0 0 16 16"><path d="M9 2H16V14H9Z" fill="#fff" /><path d="M10 4.500H15M10 7H15M10 9.500H15M10 12H15" stroke="#2b579a" /><path d="M0 1.500L10 0V16L0 14.500Z" fill="#2b579a" /><path d="M2 5.500L3.200 10.500L5 6L6.800 10.500L8 5.500" fill="none" stroke="#fff" strokeWidth="1.200" /></svg>, open: true },
  { icon: <svg width="16" height="16" viewBox="0 0 16 16"><path d="M9 2H16V14H9Z" fill="#fff" /><path d="M10 4.500H15M10 7H15M10 9.500H15M10 12H15M12.700 3V13" stroke="#217346" /><path d="M0 1.500L10 0V16L0 14.500Z" fill="#217346" /><path d="M3 5L7.500 11M7.500 5L3 11" stroke="#fff" strokeWidth="1.400" /></svg>, open: true },
];

const Taskbar = () => (
  <footer className="flex h-[30px] items-center bg-[#242424] text-white">
    <span className="flex w-9 justify-center"><svg width="16" height="16" viewBox="0 0 16 16" fill="#fff"><path d="M0 2.500L6.500 1.500V7.500H0ZM7.500 1.300L16 0V7.500H7.500ZM0 8.500H6.500V14.500L0 13.500ZM7.500 8.500H16V16L7.500 14.700Z" /></svg></span>
    <span className="flex w-9 justify-center">
      <svg width="17" height="17" viewBox="0 0 17 17" fill="none" stroke="#fff" strokeWidth="1.300"><circle cx="10.700" cy="6.200" r="5.300" /><path d="M6.800 10L.8 16.200" strokeWidth="1.500" /></svg>
    </span>
    <span className="flex w-9 justify-center"><span className="h-4 w-4 rounded-full border-2 border-white" /></span>
    <span className="mr-[2px] flex w-9 justify-center">
      <svg width="17" height="16" viewBox="0 0 17 16" fill="none" stroke="#eee" strokeWidth="1.200"><path d="M.6 0V2.500H12V0M.6 16V13.500H12V16M.6 5H12V11H.6ZM15 1V15M14 6H16.500" /></svg>
    </span>
    {apps.map((a, i) => (
      <span key={i} className={`flex h-full w-[37px] flex-col items-center ${a.active ? 'bg-[#4d4d4d]' : ''}`}>
        <span className="flex flex-1 items-center pt-[2px]">{a.icon}</span>
        <span className={`h-[2px] ${a.active ? 'w-full' : 'w-7'} ${a.open ? 'bg-[#76b9ed]' : ''}`} />
      </span>
    ))}
    <div className="ml-auto flex items-center">
      <svg width="23" height="22" viewBox="0 0 23 22" className="mt-[2px]"><circle cx="10.500" cy="10" r="10" fill="#f7a823" /><path d="M5 21.500Q1.500 21 2 17.500Q3 14.500 6 15Q8 10.500 12 11Q16 11 17.500 14.500Q22 14.500 22.500 18Q22 21.500 19 21.500Z" fill="#c9dcf8" /></svg>
      <span className="ml-[7px] w-[46px] text-[13.500px] tracking-[-0.3px]">29°C</span>
      <ChevronUp size={19} strokeWidth={1.700} />
      <svg width="13" height="13" viewBox="0 0 13 13" className="ml-[8px] mt-[3px]" fill="none" stroke="#ddd" strokeWidth="1.200"><path d="M.6 13Q1 1.500 13 .6M3.600 13Q4 4.500 13 3.600M6.600 13Q7 7.500 13 6.600" /><circle cx="11.500" cy="11.500" r="1.300" fill="#fff" stroke="none" /></svg>
      <svg width="17" height="14" viewBox="0 0 17 14" className="ml-[8px] mt-[2px]"><path d="M2 9Q0 8 .5 6Q1 4 3.500 4.500Q5 .5 9 1Q12 1.500 12.500 5Q15 5 14.500 9Z" fill="#bbb" /><circle cx="11.500" cy="9" r="4.500" fill="#777" /><path d="M10.300 7V11M12.700 7V11" stroke="#fff" /></svg>
      <svg width="16" height="12" viewBox="0 0 16 12" className="ml-[8px]" fill="none" stroke="#eee"><path d="M1.500 0V2M4.500 0V2M.5 2.500H5.500V4.500L3 6.500L.5 4.500M3 6.500V10.500H14V3.500H7M15.500 5.500V8.500" /><path d="M6 5.500H12V8.500H6Z" fill="#fff" /></svg>
      <svg width="17" height="14" viewBox="0 0 17 14" className="ml-[8px]" fill="none" stroke="#eee"><path d="M.5 5H3L6.500 1.500V12.500L3 9H.5ZM8.500 5Q10 7 8.500 9" /><path d="M10.500 3Q13.500 7 10.500 11M13 1.500Q17 7 13 12.500" stroke="#888" /></svg>
      <span className="ml-[9px] w-[44px] text-[12px] tracking-[-0.75px]">12:00</span>
      <svg width="17" height="17" viewBox="0 0 17 17"><path d="M.5.500H16.500V13.500H11L8.500 16.500L6 13.500H.5Z" fill="#fff" /><path d="M3.500 4H13.500M3.500 7H13.500M3.500 10H10" stroke="#242424" /></svg>
      <span className="ml-[20px] mr-1 h-[30px] w-px bg-[#656565]" />
    </div>
  </footer>
);

export default function App() {
  return (
    <div className="flex h-[768px] w-[1366px] flex-col overflow-hidden font-['Noto_Sans',sans-serif]">
      <div className="flex h-[738px]">
        <Sidebar />
        <div className="flex min-w-0 flex-1 flex-col">
          <TabBar />
          <header className="h-[70px] border-b border-[#111418] bg-[#3b4550]">
            <Toolbar />
            <Bookmarks />
          </header>
          <Page />
        </div>
      </div>
      <Taskbar />
    </div>
  );
}
